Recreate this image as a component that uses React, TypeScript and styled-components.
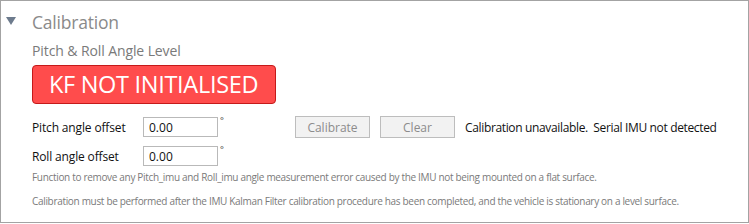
import React, { useState } from 'react';
import styled, { createGlobalStyle } from 'styled-components';

const GlobalStyle = createGlobalStyle`
  html, body {
    margin: 0;
    padding: 0;
    background: #fff;
  }
  body {
    font-family: "Open Sans", "Noto Sans", sans-serif;
  }
`;

const Panel = styled.div`
  box-sizing: border-box;
  width: 749px;
  height: 223px;
  border: 1px solid #a3a3a3;
  background: #fff;
`;

const Header = styled.div`
  display: flex;
  align-items: center;
  height: 41px;
  padding-left: 5px;
`;

const Arrow = styled.span`
  width: 0;
  height: 0;
  border-left: 5px solid transparent;
  border-right: 5px solid transparent;
  border-top: 8px solid #6d7b8d;
  margin-top: -2px;
`;

const Title = styled.h2`
  margin: 1px 0 0 16px;
  font-size: 17.5px;
  font-weight: 400;
  color: #8a8a8a;
  letter-spacing: -0.2px;
`;

const Body = styled.div`
  padding-left: 31px;
  display: flex;
  flex-direction: column;
`;

const Subtitle = styled.div`
  box-sizing: border-box;
  font-size: 14px;
  color: #7a7a7a;
  height: 23px;
  padding-top: 1px;
  line-height: 16px;
  letter-spacing: -0.1px;
`;

const Badge = styled.div`
  box-sizing: border-box;
  width: 244px;
  height: 39px;
  background: #ff4c4c;
  border: 1px solid #c41a1a;
  border-radius: 4px;
  color: #fff;
  font-size: 23.5px;
  line-height: 37px;
  padding-left: 16px;
  letter-spacing: -0.3px;
`;

const Rows = styled.div`
  display: flex;
  flex-direction: column;
  gap: 9px;
  margin-top: 13px;
`;

const Row = styled.div`
  display: flex;
  align-items: center;
  height: 20px;
`;

const Label = styled.label`
  width: 111px;
  font-size: 12px;
  color: #111;
  letter-spacing: -0.15px;
`;

const Field = styled.input`
  box-sizing: border-box;
  width: 75px;
  height: 20px;
  border: 1px solid #b9b9b9;
  padding: 0 5px;
  font-family: "Open Sans", "Noto Sans", sans-serif;
  font-size: 12px;
  color: #111;
  outline: none;
`;

const Degree = styled.span`
  width: 75px;
  align-self: flex-start;
  font-size: 9px;
  line-height: 8px;
  color: #333;
  padding-left: 2px;
`;

const Button = styled.button`
  box-sizing: border-box;
  width: 75px;
  height: 22px;
  background: #f2f2f2;
  border: 1px solid #bdbdbd;
  color: #8c8c8c;
  font-family: "Open Sans", "Noto Sans", sans-serif;
  font-size: 12px;
  margin-right: 10px;
  padding: 0;
`;

const Status = styled.span`
  font-size: 12px;
  color: #111;
  white-space: pre;
  letter-spacing: -0.35px;
`;

const Note = styled.p`
  margin: 0;
  font-size: 10px;
  color: #7a7a7a;
  letter-spacing: -0.32px;
  line-height: 14px;
`;

const Notes = styled.div`
  display: flex;
  flex-direction: column;
  gap: 10px;
  margin-top: 4px;
`;

export default function App() {
  const [pitch, setPitch] = useState('0.00');
  const [roll, setRoll] = useState('0.00');

  return (
    <>
      <GlobalStyle />
      <Panel>
        <Header>
          <Arrow />
          <Title>Calibration</Title>
        </Header>
        <Body>
          <Subtitle>Pitch &amp; Roll Angle Level</Subtitle>
          <Badge>KF NOT INITIALISED</Badge>
          <Rows>
            <Row>
              <Label>Pitch angle offset</Label>
              <Field value={pitch} onChange={e => setPitch(e.target.value)} />
              <Degree>°</Degree>
              <Button disabled>Calibrate</Button>
              <Button disabled>Clear</Button>
              <Status>Calibration unavailable.  Serial IMU not detected</Status>
            </Row>
            <Row>
              <Label>Roll angle offset</Label>
              <Field value={roll} onChange={e => setRoll(e.target.value)} />
              <Degree>°</Degree>
            </Row>
          </Rows>
          <Notes>
            <Note>Function to remove any Pitch_imu and Roll_imu angle measurement error caused by the IMU not being mounted on a flat surface.</Note>
            <Note>Calibration must be performed after the IMU Kalman Filter calibration procedure has been completed, and the vehicle is stationary on a level surface.</Note>
          </Notes>
        </Body>
      </Panel>
    </>
  );
}
